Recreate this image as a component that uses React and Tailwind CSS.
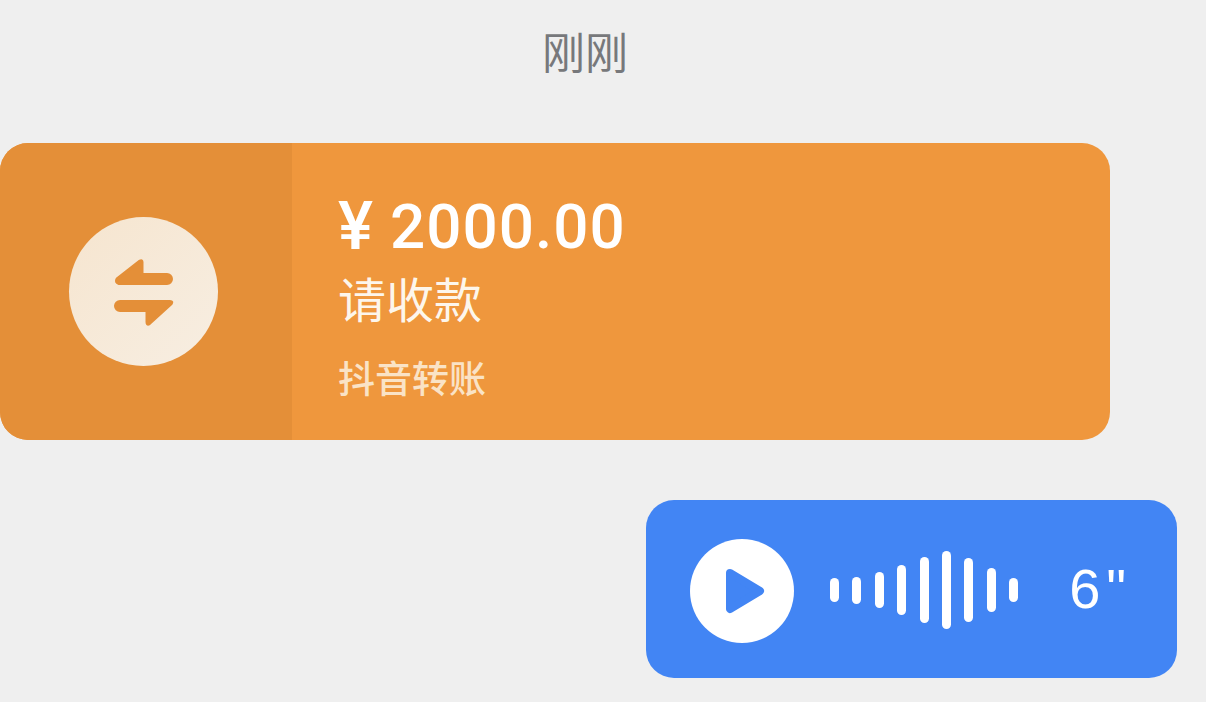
import React from "react";

const bars = [24, 27, 36, 50, 66, 78, 64, 44, 24];
const cjk = { fontFamily: '"Noto Sans CJK SC", "Noto Sans", sans-serif' };

function TransferIcon() {
  return (
    <svg width="62" height="72" viewBox="0 0 62 72" fill="#e48f38" stroke="#e48f38" strokeWidth="3" strokeLinejoin="round" strokeLinecap="round">
      <path d="M4 23 L27 5 Q29 4 29 6 L29 18.5 L54 18.5 A4.5 4.5 0 0 1 54 27.5 L6 27.5 Q2 26 4 23 Z" />
      <path d="M7 45.5 L57 45.5 Q60 45.5 58 48 L36 68 Q34 69 34 66 L34 54.5 L7 54.5 A4.5 4.5 0 0 1 7 45.5 Z" />
    </svg>
  );
}

function PlayIcon() {
  return (
    <svg width="42" height="50" viewBox="0 0 42 50">
      <path d="M6 7 L36 25 L6 43 Z" fill="#4285f4" stroke="#4285f4" strokeWidth="8" strokeLinejoin="round" />
    </svg>
  );
}

export default function App() {
  return (
    <div className="w-[1206px] h-[702px] overflow-hidden bg-[#efefef] flex flex-col" style={cjk}>
      <div className="h-[143px] pt-[19px] pr-[36px] text-center text-[43px] leading-[62px] text-[#77787b]">刚刚</div>

      <div className="w-[1110px] h-[297px] rounded-[28px] bg-[#ef973d] flex overflow-hidden">
        <div className="w-[292px] bg-[#e48f38] flex items-center justify-center pr-[6px]">
          <div className="w-[149px] h-[149px] rounded-full bg-gradient-to-br from-[#f6e5cf] to-[#f7eee2] flex items-center justify-center pl-[2px]">
            <TransferIcon />
          </div>
        </div>
        <div className="flex flex-col pl-[46px] text-white">
          <div className="mt-[46px] h-[76px] flex items-center text-[62px] leading-[76px] font-medium" style={{ fontFamily: 'Roboto, "Noto Sans", sans-serif' }}>
            <span className="text-[66px] mr-[17px]">¥</span>
            <span className="tracking-[1px]">2000.00</span>
          </div>
          <div className="-mt-[3px] h-[70px] text-[48px] leading-[70px] text-[#fdf6ec]">请收款</div>
          <div className="mt-[18px] text-[37px] leading-[54px] text-[#fae3c6] font-medium">抖音转账</div>
        </div>
      </div>

      <div className="mt-[60px] ml-[646px] w-[531px] h-[178px] rounded-[28px] bg-[#4285f4] flex items-center pl-[44px]">
        <div className="mt-[3px] w-[104px] h-[104px] rounded-full bg-white flex items-center justify-center pl-[6px]">
          <PlayIcon />
        </div>
        <div className="mt-[2px] ml-[36px] flex items-center gap-[13.4px]">
          {bars.map((h, i) => (
            <div key={i} className="w-[9px] rounded-full bg-white" style={{ height: h }} />
          ))}
        </div>
        <div className="ml-[51px] text-[56px] leading-none text-white tracking-[6px]" style={{ fontFamily: '"Liberation Sans", sans-serif' }}>6"</div>
      </div>
    </div>
  );
}
